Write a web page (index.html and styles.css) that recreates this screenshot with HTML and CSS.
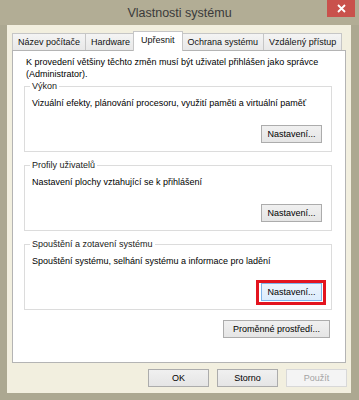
FILE: index.html
```html
<!DOCTYPE html>
<html lang="cs">
<head>
<meta charset="utf-8">
<title>Vlastnosti systému</title>
<link rel="stylesheet" href="styles.css">
</head>
<body>
<div class="window">
  <div class="titlebar">
    <span class="title">Vlastnosti systému</span>
    <div class="close">
      <svg width="9" height="9" viewBox="0 0 9 9"><path d="M1 1L8 8M8 1L1 8" stroke="#fff" stroke-width="1.8"/></svg>
    </div>
  </div>
  <div class="client">
    <div class="tabs">
      <div class="tab">Název počítače</div>
      <div class="tab">Hardware</div>
      <div class="tab active">Upřesnit</div>
      <div class="tab">Ochrana systému</div>
      <div class="tab">Vzdálený přístup</div>
    </div>
    <div class="panel">
      <p class="intro">K provedení většiny těchto změn musí být uživatel přihlášen jako správce<br>(Administrator).</p>
      <fieldset class="group">
        <legend>Výkon</legend>
        <p class="desc">Vizuální efekty, plánování procesoru, využití paměti a virtuální paměť</p>
        <div class="row"><button class="btn">Nastavení...</button></div>
      </fieldset>
      <fieldset class="group">
        <legend>Profily uživatelů</legend>
        <p class="desc">Nastavení plochy vztahující se k přihlášení</p>
        <div class="row"><button class="btn">Nastavení...</button></div>
      </fieldset>
      <fieldset class="group">
        <legend>Spouštění a zotavení systému</legend>
        <p class="desc">Spouštění systému, selhání systému a informace pro ladění</p>
        <div class="row"><span class="highlight"><button class="btn focused">Nastavení...</button></span></div>
      </fieldset>
      <div class="row env-row"><button class="btn env">Proměnné prostředí...</button></div>
    </div>
    <div class="actions">
      <button class="btn action">OK</button>
      <button class="btn action">Storno</button>
      <button class="btn action" disabled>Použít</button>
    </div>
  </div>
</div>
</body>
</html>
```

FILE: styles.css
```css
* { box-sizing: border-box; }
html, body { margin: 0; padding: 0; }
body {
  background: #aca891;
  font-family: "Liberation Sans", Arial, sans-serif;
  font-size: 9px;
  color: #000;
}
.window {
  width: 359px;
  height: 400px;
  display: flex;
  flex-direction: column;
}
.titlebar {
  height: 25px;
  display: grid;
  grid-template-columns: 1fr auto 1fr;
  align-items: start;
  background: #b2ad95;
}
.title {
  grid-column: 2;
  font-size: 12.5px;
  color: #3a3a3a;
  line-height: 26px;
}
.close {
  grid-column: 3;
  justify-self: end;
  margin-right: 4px;
  width: 28px;
  height: 17px;
  background: #c9514c;
  display: flex;
  align-items: center;
  justify-content: center;
}
.client {
  margin: 0 8px 0 7px;
  height: 368px;
  background: #f2efdf;
  padding: 6px 4px 0 5px;
  display: flex;
  flex-direction: column;
}
.tabs {
  height: 20px;
  margin-bottom: -1px;
  display: flex;
  align-items: flex-end;
  position: relative;
  z-index: 1;
}
.tab {
  height: 17px;
  margin-bottom: 1px;
  margin-right: -1px;
  padding: 0 5px;
  border: 1px solid #c6c6c6;
  border-bottom: none;
  background: linear-gradient(#f4f4f4, #e8e8e8);
  line-height: 17px;
  white-space: nowrap;
  color: #111;
}
.tab.active {
  height: 20px;
  margin: 0 -1px 0 -2px;
  padding: 0 7px;
  background: #fff;
  line-height: 17px;
  position: relative;
  z-index: 2;
}
.panel {
  height: 313px;
  width: 334px;
  background: #fff;
  border: 1px solid #b4b4b4;
  padding: 5px 13px 0 11px;
  display: flex;
  flex-direction: column;
}
.intro {
  margin: 0;
  padding-left: 2px;
  line-height: 12px;
}
.group {
  margin: 0 0 7px 0;
  height: 72px;
  border: 1px solid #dcdcdc;
  padding: 0 9px 0 7px;
  min-width: 0;
  display: flex;
  flex-direction: column;
}
.group legend {
  line-height: 12px;
  padding: 0 2px;
  margin-left: -2px;
  color: #1a1a1a;
}
.desc {
  margin: 5px 0 0;
  line-height: 12px;
}
.row {
  display: flex;
  justify-content: flex-end;
  margin-top: 16px;
}
.btn {
  font: inherit;
  color: #000;
  height: 18px;
  width: 61px;
  padding: 0;
  border: 1px solid #acacac;
  background: linear-gradient(#f0f0f0, #e5e5e5);
  line-height: 16px;
}
.btn.focused {
  border-color: #7eb4ea;
  background: linear-gradient(#ecf4fc, #dcecfc);
}
.highlight {
  display: flex;
  border: 3px solid #e3141f;
  padding: 0 1px 1px 2px;
  margin: -3px -4px -4px -5px;
  background: #fff;
}
.env-row {
  margin-top: 3px;
  margin-right: 2px;
}
.btn.env {
  width: 107px;
}
.actions {
  display: flex;
  justify-content: flex-end;
  gap: 8px;
  margin-top: 6px;
  padding-right: 0;
}
.btn.action {
  height: 18px;
}
.btn[disabled] {
  color: #a3a3a3;
  border-color: #d8d8d8;
  background: #f4f4f4;
}
```
